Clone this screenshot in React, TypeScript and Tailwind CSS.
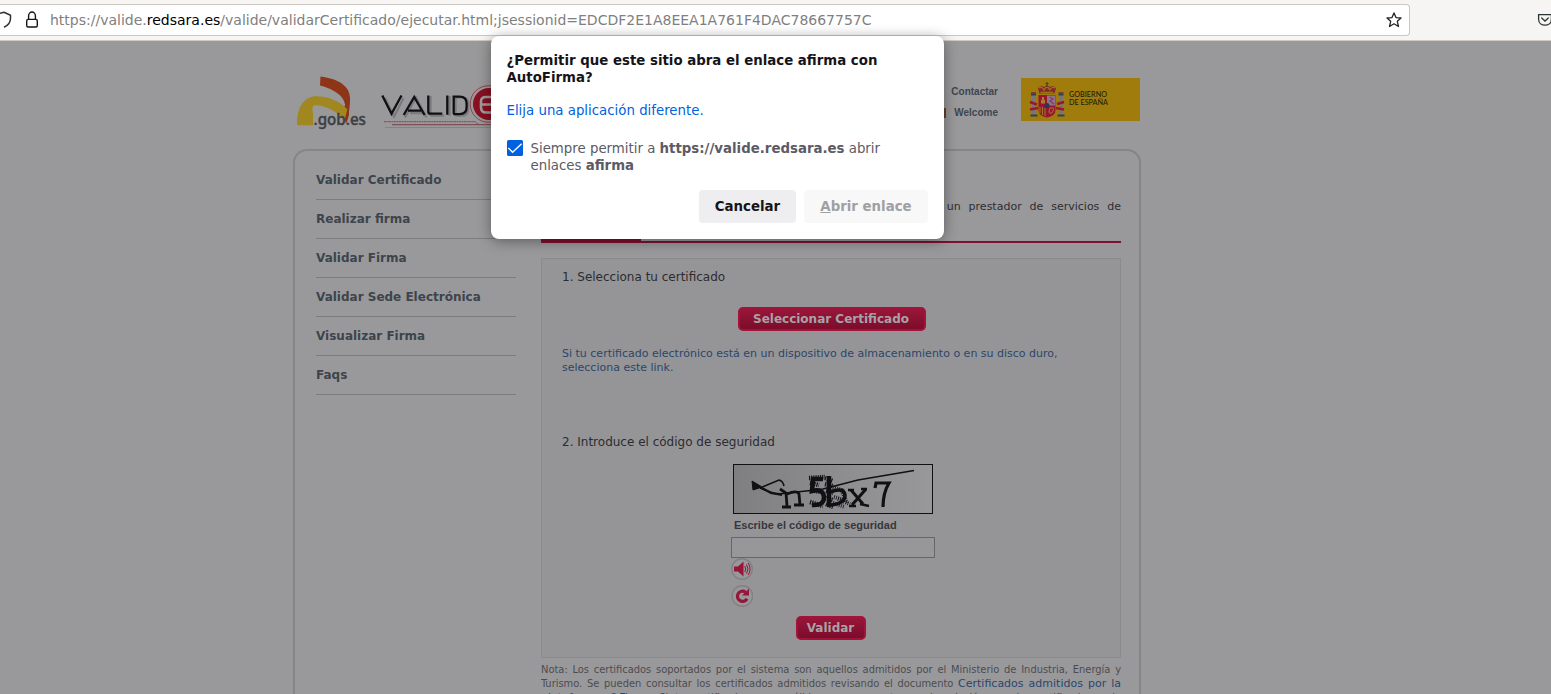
import type { ReactNode } from 'react';

const menu = ['Validar Certificado', 'Realizar firma', 'Validar Firma', 'Validar Sede Electrónica', 'Visualizar Firma', 'Faqs'];

function BrowserBar() {
  return (
    <header className="flex h-[41px] items-start border-b border-[#d0cac3] bg-[#f6f5f3] pt-1">
      <div className="flex h-8 w-[1410px] shrink-0 items-center rounded-r border border-l-0 border-[#cdc7c2] bg-white text-[14px] text-[#808080]">
        <svg className="h-[18px] w-[12px] shrink-0" viewBox="0 0 12 18" fill="none" stroke="#2e3436" strokeWidth="1.5">
          <path d="M-5 3.5L4 1.2l6.5 3v3C10.5 12 8 14.5 4 16.3" strokeLinejoin="round" />
        </svg>
        <svg className="ml-[13px] h-[18px] w-[14px] shrink-0" viewBox="0 0 14 18" fill="none" stroke="#15141a" strokeWidth="1.4">
          <rect x="1.7" y="8.4" width="10.6" height="7.6" rx="1.5" />
          <path d="M3.6 8V4.8a3.4 3.8 0 0 1 6.8 0V8" />
        </svg>
        <span className="ml-[11px] whitespace-pre">https://valide.<span className="text-black">redsara.es</span>/valide/validarCertificado/ejecutar.html;jsessionid=EDCDF2E1A8EEA1A761F4DAC78667757C</span>
        <svg className="ml-auto mr-[7px] h-4 w-4 shrink-0" viewBox="0 0 16 16" fill="none" stroke="#222" strokeWidth="1.3" strokeLinejoin="round">
          <path d="M8 .9l2 4.7 5 .4-3.7 3.3 1.2 5.2L8 11.8l-4.5 2.7 1.2-5.2L1 6l5-.4z" />
        </svg>
      </div>
      <svg className="ml-[127px] mt-2 h-4 w-4 shrink-0" viewBox="0 0 16 16" fill="none" stroke="#2e3436" strokeWidth="1.3">
        <path d="M1.6 2.7h12.8v4.5c0 8-12.8 8-12.8 0z" />
        <path d="M4.7 6L8 9l3.3-3" strokeLinecap="round" />
      </svg>
    </header>
  );
}

function RedButton({ children, width }: { children: ReactNode; width: string }) {
  return (
    <button className={`${width} h-6 rounded-[5px] border-2 border-[#a31239] bg-gradient-to-b from-[#99163a] to-[#7b0c2b] pb-px pr-px text-[12px] font-bold leading-none text-[#a8a2a7]`}>
      {children}
    </button>
  );
}

function Logos() {
  return (
    <svg className="h-[65px] w-[230px] shrink-0" viewBox="290 70 230 65">
      <path d="M320.5 76.6c19 2.5 29.5 10 29.5 22 0 10-1.5 19-4.2 24.5l-1-10c3-12-4-22-24.8-27.5z" fill="#8e3417" />
      <path d="M344.5 106l4.5-4v12q-1.5 8-3.2 9.500-1-8-3-14z" fill="#8e3417" />
      <path d="M297.3 125.3c-1-17 6-28 18-29 12-.5 25 5 32 13l-2.500 10c-10-9-21-14.500-30-14-3 .3-2.500 4.500-1.800 7.500v12.500z" fill="#a18720" />
      <text x="313.5" y="124.5" className="font-['Noto_Sans'] text-[16px] font-medium" textLength="52.5" fill="#3e3e43" stroke="#3e3e43" strokeWidth=".4" lengthAdjust="spacingAndGlyphs">.gob.es</text>
      <g fill="none" strokeWidth="2.300">
        <path d="M385 98l9 18.700 9.500-18.700M405 117.500l11-20 10.500 20M410 113h13M430.500 96v18q0 1.700 2 1.700h11.700M449.500 96v19.700M455.500 97.300v17.200q0 1.200 1.200 1.200h4.500q7 0 7-7v-4.400q0-7-7-7z" stroke="#7b7b7f" />
        <path d="M382.300 95.500l9.200 18.300 10-18.300M403.700 115l10.500-18 10.400 18M408 110.700h13M428.300 95.500v16q0 2.200 2 2.200h12M447.300 95.500v19.300M453.700 96.700v16q0 1.400 1.400 1.400h4.500q7 0 7-6.800v-3.800q0-6.800-7-6.800z" stroke="#101012" />
      </g>
      <path d="M384 121.700h91l4 3" fill="none" stroke="#8d4650" strokeDasharray="2 .5" />
      <path d="M392 124.700h103" stroke="#744047" />
      <path d="M385 127.500h110" stroke="#838387" />
      <circle cx="488.500" cy="104" r="18.300" fill="none" stroke="#94404b" strokeWidth="1" />
      <circle cx="489" cy="104" r="16" fill="#890f21" />
      <path d="M500 97h-14q-5 0-5 4.500v6q0 5 5 5h14M481 104.500h19" fill="none" stroke="#a09a9d" strokeWidth="2.600" />
    </svg>
  );
}

function GovernmentLogo() {
  return (
    <div className="mt-2 h-[43px] w-[119px] bg-[#9f7c0c]">
      <svg className="h-full w-full" viewBox="0 0 119 43">
        <path d="M12.500 17v20M40 17v20" stroke="#77747a" strokeWidth="3.500" />
        <path d="M10 16.500h5M9.500 37.500h7M37.500 16.500h5M36.500 37.500h7" stroke="#27455b" strokeWidth="2.200" />
        <path d="M10 15h5M37.500 15h5" stroke="#8f2030" strokeWidth="1.500" />
        <path d="M9 24l7 2.500M9 31.500l8-1.500M36 26l7-2M35 30l8 1.500" stroke="#98192f" strokeWidth="2.500" />
        <path d="M17.500 17h17v15q0 6-8.500 7.500-8.500-1.500-8.500-7.500z" fill="#971531" />
        <path d="M26 17.500h8.300v10H26z" fill="#8d7489" />
        <path d="M29 19l3 2-3 2 4 3" fill="none" stroke="#8a3a62" strokeWidth="1.300" />
        <path d="M19 29v6M21.500 29v8M24 30v8" fill="none" stroke="#9a7920" strokeWidth="1.100" />
        <path d="M20 25.500v-4l2 1 2-1v4zM21 19h2v3h-2z" fill="#a58220" />
        <path d="M29 30q5-1 3 3-2 4-4 1z" fill="none" stroke="#a06a28" strokeWidth="1.200" />
        <circle cx="26" cy="27.500" r="2.500" fill="#26385c" />
        <path d="M18.500 15.500L17 10q3-3 6-1l3-2 3 2q3-2 6 1l-1.500 5.500z" fill="#87242d" />
        <path d="M19.500 14.500h13M18 10q3-2 5 2 3-6 6 0 2-4 5-2" fill="none" stroke="#98741a" strokeWidth="1.300" />
        <path d="M26 4v5M24.500 5.500h3" fill="none" stroke="#4a4220" strokeWidth="1.100" />
        <text x="48" y="19" textLength="38" lengthAdjust="spacingAndGlyphs" className="font-[Lato] text-[6.600px] font-medium" fill="#241d0c">GOBIERNO</text>
        <text x="48" y="26.500" textLength="39" lengthAdjust="spacingAndGlyphs" className="font-[Lato] text-[6.600px] font-medium" fill="#241d0c">DE ESPAÑA</text>
      </svg>
    </div>
  );
}

function Captcha() {
  return (
    <svg className="h-[50px] w-[200px]" viewBox="0 0 200 50" fill="none" stroke="#111114">
      <defs><linearGradient id="paper" x2="1"><stop stopColor="#7f7f82" /><stop offset=".6" stopColor="#8f8f92" /><stop offset="1" stopColor="#98989b" /></linearGradient></defs>
      <rect x=".5" y=".5" width="199" height="49" fill="url(#paper)" />
      <path d="M27 24l10 4q8 3 17 1 20-2 36-4L125 16l56-9.500" strokeWidth="1.600" />
      <path d="M19 17l10 6-9 3z" fill="#111114" />
      <path d="M27 24l19-8q4 1 5 6" strokeWidth="1.600" />
      <path d="M29 24l9 5 11 2" strokeWidth="2.200" />
      <path d="M47 25l6 4 1 13M49 43h9M54 30q10-4 12 0l1 11M61 41h10" strokeWidth="2.800" />
      <path d="M90 15H80l-1 12q11-3 12 6 0 9-12 8M96 12v31" strokeWidth="4.500" />
      <path d="M97 28q14-5 15 3 0 9-15 10" strokeWidth="3.500" />
      <path d="M76 14l16-1M77 19l9 2M77 26l11 2M77 38l13 4M92 14l8 3M92 20l8 2M93 27l7 2M92 34l8 2M93 40l7 3" strokeWidth="4.500" strokeDasharray="1.200 1" />
      <path d="M100 23l11 4M101 33l10 3M100 39l12 4M108 25l6 14M105 35l12 5" strokeWidth="4" strokeDasharray=".8 1.300" />
      <path d="M118 26l12 14M133 25l-14 16" strokeWidth="3" />
      <path d="M115 26h6M127 40l9 2M116 42h7M128 25h6" strokeWidth="2.500" />
      <path d="M142 24l1-5h13q-6 10-6 24" strokeWidth="3.200" />
    </svg>
  );
}

function PermissionDialog() {
  return (
    <section className="absolute left-[491px] top-9 z-10 flex h-[203px] w-[453px] flex-col rounded-lg bg-white p-4 pl-[15.500px] text-[13.33px] leading-[17px] text-[#5b5b66] shadow-[0_2px_14px_rgba(0,0,0,0.4)]">
      <h1 className="whitespace-pre font-bold text-[#15141a]">{'¿Permitir que este sitio abra el enlace afirma con\nAutoFirma?'}</h1>
      <a className="mt-4 text-[#0061e0]">Elija una aplicación diferente.</a>
      <div className="mt-[21px] flex pl-[.5px]">
        <svg className="h-4 w-4 shrink-0" viewBox="0 0 16 16"><rect width="16" height="16" rx="1.500" fill="#0061e0" /><path d="M1.300 8l4.300 4.300 9-8.500" fill="none" stroke="white" strokeWidth="1.300" /></svg>
        <p className="ml-[7.5px] whitespace-pre">Siempre permitir a <b>https://valide.redsara.es</b> abrir{'\n'}enlaces <b>afirma</b></p>
      </div>
      <div className="mt-4 flex justify-end gap-2 font-bold">
        <button className="h-[33px] w-[97px] rounded bg-[#eeeef1] text-[#15141a]">Cancelar</button>
        <button className="h-[33px] w-[124px] rounded bg-[#f8f8f9] text-[#a0a0a3]"><u>A</u>brir enlace</button>
      </div>
    </section>
  );
}

function CertificateForm() {
  return (
    <form className="mt-[15px] h-[400px] border border-[#8b8b8e] bg-[#959597] px-5 pt-[10px] text-[12px] leading-4 text-[#2c2c30]">
      <p>1. Selecciona tu certificado</p>
      <div className="mt-[22px] flex justify-center pl-px"><RedButton width="w-[188px]">Seleccionar Certificado</RedButton></div>
      <p className="mt-4 whitespace-pre text-[11px] leading-[14px] text-[#2b466b]">{'Si tu certificado electrónico está en un dispositivo de almacenamiento o en su disco duro,\nselecciona este link.'}</p>
      <p className="mt-[59px]">2. Introduce el código de seguridad</p>
      <div className="ml-[169px] mt-[14px] flex flex-col items-start">
        <div className="ml-[2px]"><Captcha /></div>
        <label className="ml-[3px] mt-[3px] font-['Liberation_Sans'] text-[11px] font-bold text-[#37373b]">Escribe el código de seguridad</label>
        <input className="mt-1 h-[21px] w-[204px] border border-[#66666a] bg-[#979799]" />
        <svg className="h-[22px] w-[22px]" viewBox="0 0 22 22">
          <circle cx="11" cy="11" r="10.300" fill="#98989b" stroke="#828286" strokeWidth="1.400" />
          <path d="M3 8.500h4l5.500-5v15l-5.500-5H3z" fill="#971538" /><path d="M13.800 8q1.800 3 0 6M15.500 6.300q3 4.700 0 9.400M17.300 5q3.500 6 0 12" fill="none" stroke="#971538" />
        </svg>
        <svg className="mt-[5px] h-[22px] w-[22px]" viewBox="0 0 22 22">
          <circle cx="11.300" cy="11" r="10.300" fill="#98989b" stroke="#828286" strokeWidth="1.400" />
          <path d="M14.500 7.200a5.100 5.100 0 1 0 1.500 6.500" fill="none" stroke="#971538" strokeWidth="3.200" /><path d="M18 3.500v7h-7z" fill="#971538" />
        </svg>
      </div>
      <div className="mt-[9px] flex justify-center"><RedButton width="w-[70px]">Validar</RedButton></div>
    </form>
  );
}

export default function App() {
  return (
    <div className="relative h-[694px] w-[1551px] overflow-hidden bg-[#99999b] font-['DejaVu_Sans',sans-serif]">
      <BrowserBar />
      <main className="ml-[293px] w-[848px] pt-[29px]">
        <div className="flex h-[79px] justify-between pr-px">
          <div className="-ml-[3px]"><Logos /></div>
          <div className="flex">
            <nav className="mr-[23px] flex flex-col items-end pt-[11px] font-['Liberation_Sans'] text-[10px] font-bold leading-[21px] text-[#3f464f]">
              <a>Contactar</a><span><span className="mr-2 text-[#222]">|</span>Welcome</span>
            </nav>
            <GovernmentLogo />
          </div>
        </div>
        <div className="flex h-[560px] rounded-t-[14px] border-2 border-b-0 border-[#858588] pl-[21px] pr-[18px]">
          <nav className="w-[200px] pt-[10px] text-[12px] font-bold text-[#3e444b]">
            {menu.map((item) => <a key={item} className="flex h-[39px] items-center border-b border-[#7c7c7f]">{item}</a>)}
          </nav>
          <section className="ml-auto w-[580px]">
            <p className="flex h-[67px] items-end justify-end pb-[3px] text-[11px] text-[#2d2d32] [word-spacing:4.4px]">un prestador de servicios de</p>
            <div className="mt-[19px] h-[6px] border-b-2 border-[#7f1030]"><div className="h-[5px] w-[100px] bg-[#7f1030]" /></div>
            <CertificateForm />
            <div className="mt-[5px] font-['DejaVu_Sans_Condensed','DejaVu_Sans'] text-[11px] leading-[14px] text-[#4c4c50]">
              <p className="text-justify [text-align-last:justify]">Nota: Los certificados soportados por el sistema son aquellos admitidos por el Ministerio de Industria, Energía y</p>
              <p className="text-justify [text-align-last:justify]">Turismo. Se pueden consultar los certificados admitidos revisando el documento <span className="font-['DejaVu_Sans'] text-[#2b466b]">Certificados admitidos por la</span></p>
              <p className="text-justify [text-align-last:justify]"><span className="font-['DejaVu_Sans'] text-[#2b466b]">plataforma @Firma</span>. Si tu certificado no es válido y se encuentra en la relación, puedes notificarlo en la</p>
            </div>
          </section>
        </div>
      </main>
      <PermissionDialog />
    </div>
  );
}
